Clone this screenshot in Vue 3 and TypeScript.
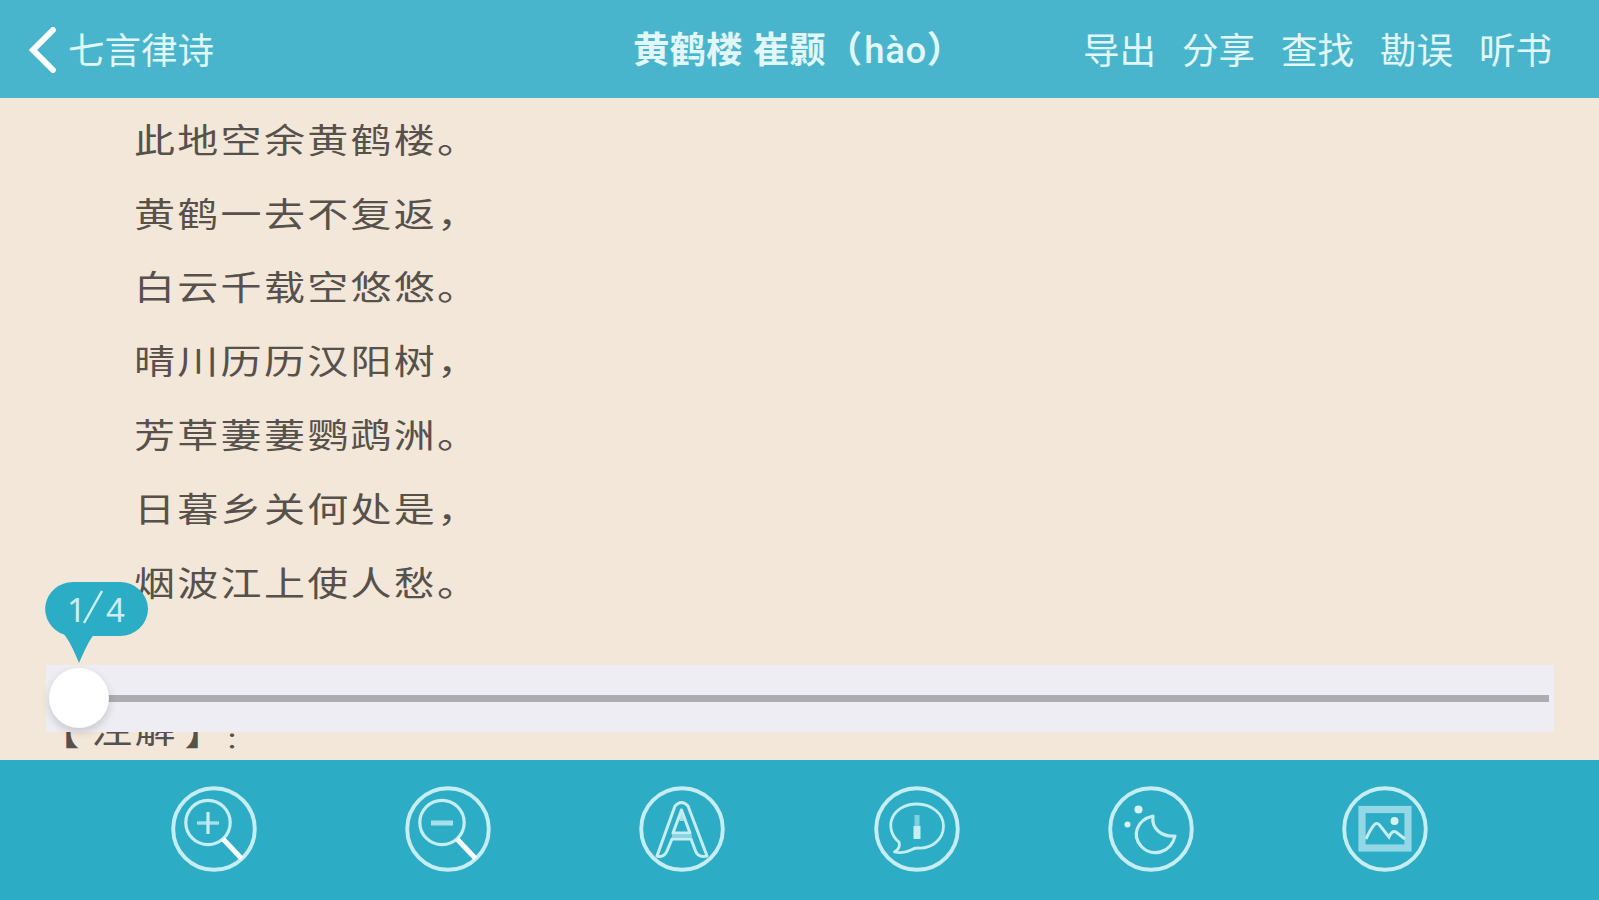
<script setup lang="ts">
const actions: string[] = ['导出', '分享', '查找', '勘误', '听书']
const verses: string[] = [
  '此地空余黄鹤楼。',
  '黄鹤一去不复返，',
  '白云千载空悠悠。',
  '晴川历历汉阳树，',
  '芳草萋萋鹦鹉洲。',
  '日暮乡关何处是，',
  '烟波江上使人愁。',
]
const tools: string[] = ['zoom-in', 'zoom-out', 'font', 'info', 'night', 'picture']
</script>

<template>
  <div class="reader">
    <header class="bar">
      <div class="back">
        <svg class="chevron" width="30" height="46" viewBox="0 0 30 46">
          <path d="M25 3 L5 23 L25 43" fill="none" stroke="#fff" stroke-width="6" stroke-linecap="round" stroke-linejoin="miter" />
        </svg>
        <span>七言律诗</span>
      </div>
      <h1 class="title">黄鹤楼 崔颢（<span class="pinyin">hào</span>）</h1>
      <nav class="actions">
        <span v-for="a in actions" :key="a">{{ a }}</span>
      </nav>
    </header>

    <main class="page">
      <p v-for="v in verses" :key="v" class="verse"><span class="ink">{{ v }}</span></p>
      <p class="verse gap"></p>
      <p class="verse note"><span class="ink"><span class="open">【</span>注解<span class="close">】</span><span class="colon">：</span></span></p>

      <div class="slider">
        <div class="track"></div>
        <div class="thumb"></div>
        <svg class="bubble" width="104" height="84" viewBox="0 0 104 84">
          <path d="M28 2 H75 A28 27 0 0 1 75 56 H48 Q44 60 34 83 Q25 61 19 54.500 A28 27 0 0 1 28 2Z" fill="#2badc6" />
          <text x="22" y="42">1</text>
          <path d="M39 43 L57 11" stroke="#c9eff4" stroke-width="2.500" />
          <text x="61" y="42">4</text>
        </svg>
      </div>
    </main>

    <footer class="tools">
      <svg v-for="t in tools" :key="t" class="tool" width="88" height="88" viewBox="0 0 88 88">
        <circle cx="44" cy="44" r="40.800" stroke-width="3.900" />
        <g v-if="t === 'zoom-in' || t === 'zoom-out'">
          <circle cx="38" cy="37.500" r="22.200" stroke-width="3.200" />
          <path d="M27 38 H49" :stroke-width="t === 'zoom-in' ? 3.4 : 5" opacity=".8" />
          <path v-if="t === 'zoom-in'" d="M38 27 V49" stroke-width="3.200" />
          <path d="M53 54 L71.500 73.500" stroke="#fff" stroke-width="5" />
        </g>
        <g v-else-if="t === 'font'" stroke-width="3" stroke-linejoin="round">
          <path d="M19 71 L37 21 Q43.500 14 50 21 L69 71 Q60 73 57.500 66 L53 54 H34 L29 66 Q26 73 19 71Z" />
          <path d="M43.500 25 L35 48 H52Z" />
          <path d="M43.500 28 V36" opacity=".8" stroke-width="4" />
          <path d="M34 51 H54" opacity=".6" />
        </g>
        <g v-else-if="t === 'info'" stroke-width="2.800" stroke-linejoin="round">
          <path d="M26 57 C10 44 18 19 44 19 C59 19 70.500 29 70.500 41 C70.500 55 58 64 45 63 Q41 63 38 65 Q31 69 21.500 67 Q28 63 26 57Z" />
          <path d="M44 30 V41" stroke-width="5" opacity=".55" />
          <path d="M44 41 V54" stroke-width="7" />
        </g>
        <g v-else-if="t === 'night'" stroke-width="3.200" stroke-linejoin="round">
          <path d="M46 31 C29 35 25 51 34 61 C45 73 64 68 68 51 C55 52 44 44 46 31Z" />
          <circle cx="31.500" cy="24.500" r="4" class="dot" />
          <circle cx="20.500" cy="39.500" r="3" class="dot" />
        </g>
        <g v-else>
          <rect x="21" y="24.500" width="46" height="38.500" stroke-width="7.200" stroke="#93d8e4" />
          <path d="M25 54 Q30 43 34 39 Q37 37 40 42 L48 52 Q51 45 55 47 L64 54" stroke-width="3" />
          <circle cx="53.500" cy="36" r="4" class="dot" />
        </g>
      </svg>
    </footer>
  </div>
</template>

<style>
body {
  margin: 0;
}
</style>

<style scoped>
.reader {
  width: 1599px;
  height: 900px;
  overflow: hidden;
  display: flex;
  flex-direction: column;
  background: #f3e7d9;
  font-family: 'Noto Sans CJK SC', sans-serif;
}
.bar {
  flex: none;
  height: 98px;
  box-sizing: border-box;
  padding: 2px 47px 0 28px;
  background: #48b5cc;
  color: #e2f7fa;
  display: grid;
  grid-template-columns: 605px 1fr auto;
  align-items: center;
  font-size: 36.5px;
  line-height: 52px;
  white-space: nowrap;
}
.back {
  display: flex;
  align-items: center;
  gap: 10px;
}
.chevron {
  flex: none;
}
.back span,
.title,
.actions {
  margin-top: -2px;
}
.title {
  margin-bottom: 0;
  font-size: 36.500px;
  font-weight: 600;
  word-spacing: 2px;
}
.pinyin {
  font-family: Roboto, 'Noto Sans', sans-serif;
  font-weight: 500;
  letter-spacing: 0.600px;
  margin-left: 2px;
}
.actions {
  display: flex;
  gap: 26px;
}
.page {
  flex: none;
  height: 662px;
  box-sizing: border-box;
  padding-top: 3px;
  overflow: hidden;
  position: relative;
}
.verse {
  margin: 0;
  height: 73.800px;
  padding-left: 134px;
  display: flex;
  align-items: center;
  font-size: 41px;
  letter-spacing: 2.300px;
  line-height: 60px;
  color: #57514b;
  white-space: nowrap;
}
.ink {
  display: block;
  transform: scaleY(0.82);
}
.note {
  padding-left: 48px;
}
.note .ink {
  display: flex;
}
.open {
  margin-left: -9px;
  margin-right: 9px;
  transform: translateY(4px);
}
.close {
  margin-left: 6px;
  letter-spacing: 0;
  transform: translateY(4px);
}
.colon {
  font-size: 28px;
  letter-spacing: 0;
  transform: translateY(12px);
}
.slider {
  position: absolute;
  left: 46px;
  top: 567px;
  width: 1508px;
  height: 67px;
  background: #eeedf3;
  display: flex;
  align-items: center;
}
.track {
  margin-left: 33px;
  width: 1470px;
  height: 7px;
  background: #adacb0;
}
.thumb {
  position: absolute;
  left: 3px;
  top: 3px;
  width: 60px;
  height: 60px;
  border-radius: 50%;
  background: #fff;
  box-shadow: 0 4px 9px rgba(0, 0, 0, 0.16);
}
.bubble {
  position: absolute;
  left: -1px;
  top: -85px;
}
.bubble text {
  font: 33px 'Noto Sans', sans-serif;
  fill: #c9eff4;
}
.tools {
  flex: none;
  height: 140px;
  box-sizing: border-box;
  padding: 25px 170px 0;
  background: #2cadc5;
  display: flex;
  justify-content: space-between;
  align-items: flex-start;
}
.tool {
  fill: none;
  stroke: #c5edf2;
}
.dot {
  fill: #d5f3f6;
  stroke: none;
}
</style>
